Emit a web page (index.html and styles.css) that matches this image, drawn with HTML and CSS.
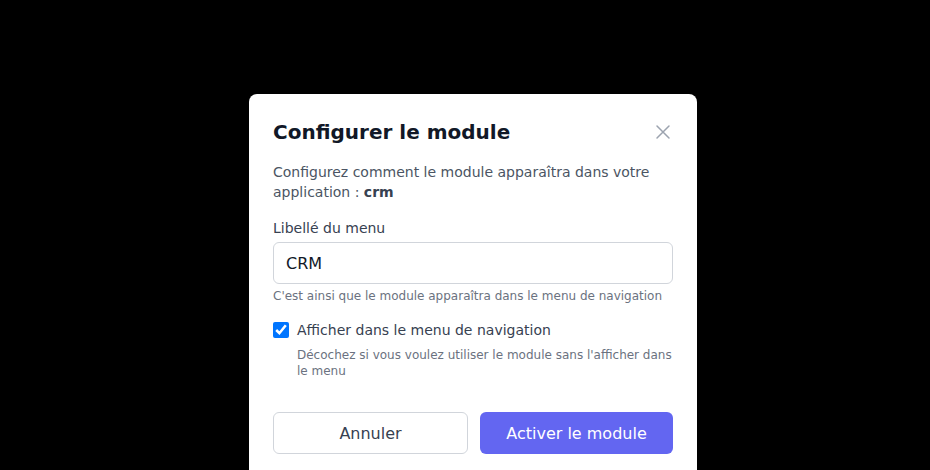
FILE: index.html
```html
<!DOCTYPE html>
<html lang="fr">
<head>
<meta charset="utf-8">
<link rel="stylesheet" href="styles.css">
</head>
<body>
<div class="overlay">
  <div class="modal">
    <div class="header">
      <h2 class="title">Configurer le module</h2>
      <button class="close" aria-label="Fermer">
        <svg width="24" height="24" viewBox="0 0 24 24" fill="none" stroke="currentColor" stroke-width="1.5" stroke-linecap="round"><path d="M6 18L18 6M6 6l12 12"/></svg>
      </button>
    </div>
    <p class="desc">Configurez comment le module apparaîtra dans votre application&nbsp;: <strong>crm</strong></p>
    <label class="label" for="menu">Libellé du menu</label>
    <input id="menu" class="input" type="text" value="CRM">
    <p class="help">C'est ainsi que le module apparaîtra dans le menu de navigation</p>
    <label class="check-row">
      <input type="checkbox" class="checkbox" checked>
      <span>Afficher dans le menu de navigation</span>
    </label>
    <p class="sub-help">Décochez si vous voulez utiliser le module sans l'afficher dans le menu</p>
    <div class="actions">
      <button class="btn btn-secondary">Annuler</button>
      <button class="btn btn-primary">Activer le module</button>
    </div>
  </div>
</div>
</body>
</html>
```
FILE: styles.css
```css
* { box-sizing: border-box; }
html, body { margin: 0; padding: 0; background: #000; height: 470px; overflow: hidden; }
body { font-family: "DejaVu Sans", sans-serif; }
.overlay { display: flex; justify-content: center; padding-top: 94px; padding-left: 16px; }
.modal { width: 448px; background: #fff; border-radius: 8px; padding: 24px; }
.header { display: flex; justify-content: space-between; align-items: center; }
.title { margin: 0; font-size: 20px; line-height: 28px; font-weight: 700; color: #111827; }
.close { border: 0; background: none; padding: 0; width: 24px; height: 24px; color: #9ca3af; margin-right: -2px; display: flex; }
.desc { margin: 16px 0 0; font-size: 14px; line-height: 20px; color: #4b5563; }
.desc strong { color: #374151; }
.label { display: block; margin-top: 16px; font-size: 14px; line-height: 20px; color: #374151; }
.input { display: block; width: 100%; height: 42px; margin-top: 4px; border: 1px solid #d1d5db; border-radius: 6px; padding: 0 12px; font-family: "DejaVu Sans", sans-serif; font-size: 16px; color: #111827; outline: none; }
.help { margin: 4px 0 0; font-size: 12px; line-height: 16px; color: #6b7280; }
.check-row { display: flex; align-items: center; gap: 8px; margin-top: 16px; font-size: 14px; line-height: 20px; color: #374151; }
.checkbox { width: 16px; height: 16px; margin: 0; }
.sub-help { margin: 7px 0 0 24px; font-size: 12px; line-height: 16px; color: #6b7280; }
.actions { display: flex; gap: 12px; margin-top: 33px; }
.btn { box-sizing: content-box; flex: 1 1 0; padding: 0; border-radius: 6px; font-family: "DejaVu Sans", sans-serif; font-size: 16px; cursor: pointer; }
.btn-secondary { height: 40px; background: #fff; border: 1px solid #d1d5db; color: #374151; }
.btn-primary { height: 42px; background: #6366f1; border: 0; color: #fff; }
```
